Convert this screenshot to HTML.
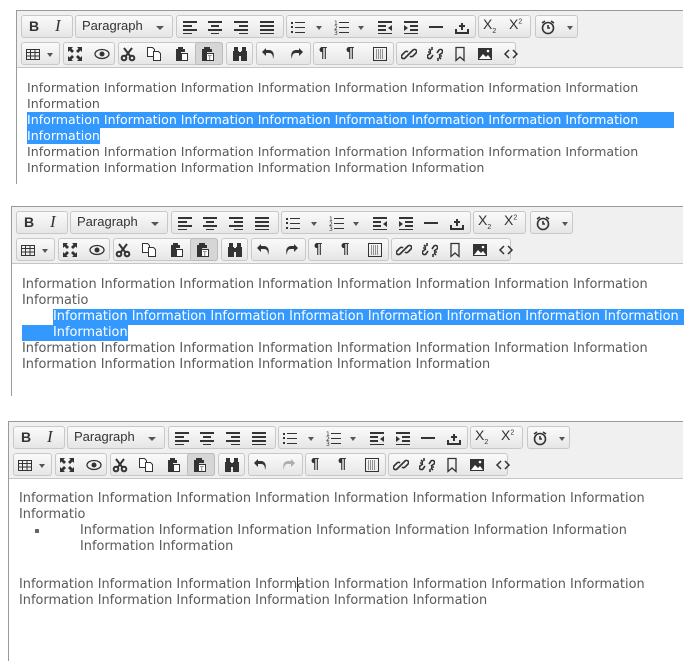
<!DOCTYPE html>
<html><head><meta charset="utf-8"><style>
*{margin:0;padding:0;box-sizing:border-box}
body{width:693px;height:661px;background:#fff;position:relative;overflow:hidden;font-family:"DejaVu Sans","Liberation Sans",sans-serif}
.p{position:absolute;border-left:1px solid #9a9a9a;border-top:1px solid #9a9a9a}
.tb{position:absolute;left:0;top:0;right:0;height:57px;background:#f0f0f0;border-bottom:1px solid #c5c5c5}
.g{position:absolute;height:23px;border:1px solid #c8c8c8;border-radius:3px;background:linear-gradient(#fafafa,#e6e6e6)}
.i{position:absolute;width:16px;height:16px}
.i svg{display:block}
.r1{top:8px}.r2{top:35px}
.t{position:absolute;font-size:12.9px;line-height:16px;color:#595959;white-space:nowrap}
#p1 .t{font-size:12.6px}
.sel{background:#3399ff;color:#fff}
.pt{position:absolute;font-family:"Liberation Sans",sans-serif;font-size:13px;color:#333;top:6px}
</style></head><body>

<div class="p" id="p1" style="left:16px;top:10px;width:667px;height:174px">
<div class="tb">
<div class="g" style="left:4px;top:4px;width:52px"></div>
<div class="g" style="left:58px;top:4px;width:98px"></div>
<div class="g" style="left:159px;top:4px;width:108px"></div>
<div class="g" style="left:269px;top:4px;width:190px"></div>
<div class="g" style="left:461px;top:4px;width:53px"></div>
<div class="g" style="left:518px;top:4px;width:43px"></div>
<div class="g" style="left:4px;top:31px;width:39px"></div>
<div class="g" style="left:46px;top:31px;width:52px"></div>
<div class="g" style="left:101px;top:31px;width:105px"></div>
<div class="g" style="left:178px;top:31px;width:28px;background:#d6d6d6;border-color:#bbb"></div>
<div class="g" style="left:209px;top:31px;width:27px"></div>
<div class="g" style="left:239px;top:31px;width:55px"></div>
<div class="g" style="left:296px;top:31px;width:81px"></div>
<div class="g" style="left:379px;top:31px;width:120px"></div>
<span class="pt" style="left:12px;font-weight:bold;font-size:14px;top:7px">B</span>
<span class="pt" style="left:38px;font-family:'Liberation Serif',serif;font-style:italic;font-size:17px;top:5px">I</span>
<span class="pt" style="left:65px;top:7px">Paragraph</span>
<span class="i r1" style="left:135px"><svg width="16" height="16"><path d="M4 7h8l-4 4z" fill="#555"/></svg></span>
<span class="i r1" style="left:165px"><svg width="16" height="16" fill="#333"><rect x="1" y="2" width="14" height="2"/><rect x="1" y="6" width="9" height="2"/><rect x="1" y="10" width="14" height="2"/><rect x="1" y="14" width="9" height="1"/></svg></span>
<span class="i r1" style="left:190px"><svg width="16" height="16" fill="#333"><rect x="1" y="2" width="14" height="2"/><rect x="4" y="6" width="8" height="2"/><rect x="1" y="10" width="14" height="2"/><rect x="4" y="14" width="8" height="1"/></svg></span>
<span class="i r1" style="left:216px"><svg width="16" height="16" fill="#333"><rect x="1" y="2" width="14" height="2"/><rect x="6" y="6" width="9" height="2"/><rect x="1" y="10" width="14" height="2"/><rect x="6" y="14" width="9" height="1"/></svg></span>
<span class="i r1" style="left:242px"><svg width="16" height="16" fill="#333"><rect x="1" y="2" width="14" height="2"/><rect x="1" y="6" width="14" height="2"/><rect x="1" y="10" width="14" height="2"/><rect x="1" y="14" width="14" height="1"/></svg></span>
<span class="i r1" style="left:273px"><svg width="16" height="16" fill="#333"><rect x="1" y="3" width="2" height="2"/><rect x="5" y="3" width="10" height="1"/><rect x="1" y="7" width="2" height="2"/><rect x="5" y="8" width="10" height="1"/><rect x="1" y="12" width="2" height="2"/><rect x="5" y="13" width="10" height="1"/></svg></span>
<span class="i r1" style="left:294px"><svg width="16" height="16"><path d="M5 7h6l-3 4z" fill="#555"/></svg></span>
<span class="i r1" style="left:317px"><svg width="16" height="16" fill="#333"><text x="0" y="6" font-size="6">1</text><text x="0" y="11" font-size="6">2</text><text x="0" y="16" font-size="6">3</text><rect x="5" y="3" width="10" height="1"/><rect x="5" y="8" width="10" height="1"/><rect x="5" y="13" width="10" height="1"/></svg></span>
<span class="i r1" style="left:336px"><svg width="16" height="16"><path d="M5 7h6l-3 4z" fill="#555"/></svg></span>
<span class="i r1" style="left:360px"><svg width="16" height="16" fill="#333"><rect x="1" y="2" width="14" height="2"/><rect x="1" y="6" width="8" height="2"/><rect x="1" y="10" width="8" height="2"/><rect x="1" y="14" width="14" height="1"/><path d="M15 6v6l-4-3z"/></svg></span>
<span class="i r1" style="left:386px"><svg width="16" height="16" fill="#333"><rect x="1" y="2" width="14" height="2"/><rect x="7" y="6" width="8" height="2"/><rect x="7" y="10" width="8" height="2"/><rect x="1" y="14" width="14" height="1"/><path d="M1 6v6l4-3z"/></svg></span>
<span class="i r1" style="left:411px"><svg width="16" height="16" fill="#333"><rect x="1" y="7" width="14" height="2"/></svg></span>
<span class="i r1" style="left:437px"><svg width="16" height="16" fill="#333"><rect x="1" y="13" width="14" height="2"/><rect x="1" y="10" width="2" height="4"/><rect x="13" y="10" width="2" height="4"/><rect x="7" y="4" width="2" height="7"/><rect x="5" y="6" width="6" height="2"/></svg></span>
<span class="pt" style="left:466px;top:5px;font-size:14px">X<sub style="font-size:7px">2</sub></span>
<span class="pt" style="left:492px;top:5px;font-size:14px">X<sup style="font-size:7px">2</sup></span>
<span class="i r1" style="left:523px"><svg width="16" height="16" fill="none" stroke="#333" stroke-width="1.6"><circle cx="8" cy="9" r="5.5"/><path d="M8 6v3h2M2 4l3-2M14 4l-3-2"/></svg></span>
<span class="i r1" style="left:545px"><svg width="16" height="16"><path d="M5 7h6l-3 4z" fill="#555"/></svg></span>
<span class="i r2" style="left:8px"><svg width="16" height="16" fill="none" stroke="#333"><rect x="1.5" y="3.5" width="13" height="10"/><path d="M1.5 6.5h13M1.5 10h13M5.5 4v10M10 4v10"/></svg></span>
<span class="i r2" style="left:26px"><svg width="16" height="16"><path d="M4 7h6l-3 4z" fill="#555"/></svg></span>
<span class="i r2" style="left:50px"><svg width="16" height="16" fill="#333"><path d="M1 1h5L4.5 2.5 7 5 5 7 2.5 4.5 1 6zM15 1v5l-1.5-1.5L11 7 9 5l2.5-2.5L10 1zM1 15v-5l1.5 1.5L5 9l2 2-2.5 2.5L6 15zM15 15h-5l1.5-1.5L9 11l2-2 2.5 2.5L15 10z"/></svg></span>
<span class="i r2" style="left:77px"><svg width="16" height="16"><ellipse cx="8" cy="8" rx="7" ry="4.5" fill="none" stroke="#333" stroke-width="1.3"/><circle cx="8" cy="8" r="2.5" fill="#333"/></svg></span>
<span class="i r2" style="left:103px"><svg width="16" height="16" fill="none" stroke="#333" stroke-width="2"><circle cx="4" cy="12" r="2.3"/><circle cx="12" cy="12" r="2.3"/><path d="M5.5 10.5L12 2M10.5 10.5L4 2"/></svg></span>
<span class="i r2" style="left:129px"><svg width="16" height="16" fill="#fff" stroke="#333"><path d="M1.5 1.5h5l2 2v7h-7z"/><path d="M7.5 5.5h5l2 2v7h-7z"/></svg></span>
<span class="i r2" style="left:156px"><svg width="16" height="16" fill="#333"><path d="M3 3h9v3H8v9H3z"/><rect x="5" y="1" width="5" height="3" fill="#333"/><path d="M8.5 7.5h6v7h-6z" fill="#fff" stroke="#333"/></svg></span>
<span class="i r2" style="left:182px"><svg width="16" height="16" fill="#333"><path d="M3 3h10v3H8v9H3z"/><rect x="5" y="1" width="6" height="3"/><path d="M7.5 7.5h7v7h-7z" fill="#fff" stroke="#333"/><text x="9" y="14" font-size="6" fill="#333">T</text></svg></span>
<span class="i r2" style="left:215px"><svg width="16" height="16" fill="#333"><rect x="1" y="5" width="6" height="10"/><rect x="9" y="5" width="6" height="10"/><rect x="2" y="1" width="4" height="4"/><rect x="10" y="1" width="4" height="4"/><rect x="6" y="6" width="4" height="4"/></svg></span>
<span class="i r2" style="left:244px"><svg width="16" height="16"><path d="M5 2L1 6l4 4V7h3c3 0 4 2 4 6 2-5 0-9-4-9H5z" fill="#333"/></svg></span>
<span class="i r2" style="left:271px"><svg width="16" height="16"><path d="M11 2l4 4-4 4V7H8c-3 0-4 2-4 6-2-5 0-9 4-9h3z" fill="#333"/></svg></span>
<span class="pt" style="left:302px;top:33px;font-weight:bold;font-size:15px">¶</span>
<span class="pt" style="left:329px;top:33px;font-weight:bold;font-size:15px">¶</span>
<span class="i r2" style="left:355px"><svg width="16" height="16" fill="none" stroke="#333"><rect x="1.5" y="1.5" width="13" height="13"/><path d="M4 4h8M4 6h8M4 8h8M4 10h8M4 12h8" stroke-dasharray="1 1"/></svg></span>
<span class="i r2" style="left:384px"><svg width="16" height="16" fill="none" stroke="#333" stroke-width="1.6"><path d="M7 9l-3 3a2 2 0 01-3-3l3-3a2 2 0 013 0M9 7l3-3a2 2 0 013 3l-3 3a2 2 0 01-3 0M6 10l4-4"/></svg></span>
<span class="i r2" style="left:410px"><svg width="16" height="16" fill="none" stroke="#333" stroke-width="1.6"><path d="M6 9l-2 3a2 2 0 01-3-3l3-2M10 7l2-3a2 2 0 013 3l-3 2M2 3l2 2M5 1v3M14 13l-2-2M11 15v-3M1 6h3M15 10h-3"/></svg></span>
<span class="i r2" style="left:435px"><svg width="16" height="16" fill="none" stroke="#333" stroke-width="1.3"><path d="M4 1.5h8v13L8 11l-4 3.5z"/></svg></span>
<span class="i r2" style="left:460px"><svg width="16" height="16"><rect x="1" y="2" width="14" height="12" fill="#333"/><path d="M2 13l4-5 3 3 2-2 3 4z" fill="#fff"/><circle cx="11" cy="5" r="1.3" fill="#fff"/></svg></span>
<span class="i r2" style="left:486px"><svg width="16" height="16" fill="none" stroke="#333" stroke-width="1.5"><path d="M6 4L2 8l4 4M10 4l4 4-4 4"/></svg></span>
</div>
<div class="t" style="left:10px;top:69px">Information Information Information Information Information Information Information Information</div>
<div class="t" style="left:10px;top:85px">Information</div>
<div class="t sel" style="left:10px;top:101px;width:647px">Information Information Information Information Information Information Information Information</div>
<div class="t sel" style="left:10px;top:117px">Information</div>
<div class="t" style="left:10px;top:133px">Information Information Information Information Information Information Information Information</div>
<div class="t" style="left:10px;top:149px">Information Information Information Information Information Information</div>
</div>

<div class="p" style="left:11px;top:206px;width:672px;height:190px">
<div class="tb" id="t2"></div>
<div class="t" style="left:10px;top:70px">Information Information Information Information Information Information Information Information</div>
<div class="t" style="left:10px;top:86px">Informatio</div>
<div class="t sel" style="left:41px;top:102px;width:631px">Information Information Information Information Information Information Information Information</div>
<div class="t sel" style="left:10px;top:118px;padding-left:31px">Information</div>
<div class="t" style="left:10px;top:134px">Information Information Information Information Information Information Information Information</div>
<div class="t" style="left:10px;top:150px">Information Information Information Information Information Information</div>
</div>

<div class="p" style="left:8px;top:421px;width:675px;height:240px">
<div class="tb" id="t3"></div>
<div class="t" style="left:10px;top:69px">Information Information Information Information Information Information Information Information</div>
<div class="t" style="left:10px;top:85px">Informatio</div>
<div style="position:absolute;left:26px;top:107px;width:4px;height:4px;background:#666"></div>
<div class="t" style="left:71px;top:101px">Information Information Information Information Information Information Information</div>
<div class="t" style="left:71px;top:117px">Information Information</div>
<div class="t" style="left:10px;top:155px">Information Information Information Information Information Information Information Information</div>
<div style="position:absolute;left:288px;top:155px;width:1px;height:15px;background:#333"></div>
<div class="t" style="left:10px;top:171px">Information Information Information Information Information Information</div>
</div>

<script>
var s=document.querySelector('.tb').innerHTML;
document.getElementById('t2').innerHTML=s;
document.getElementById('t3').innerHTML=s;
var r=document.getElementById('t3').querySelectorAll('.i')[25];
if(r)r.style.opacity='0.35';
</script>
</body></html>
